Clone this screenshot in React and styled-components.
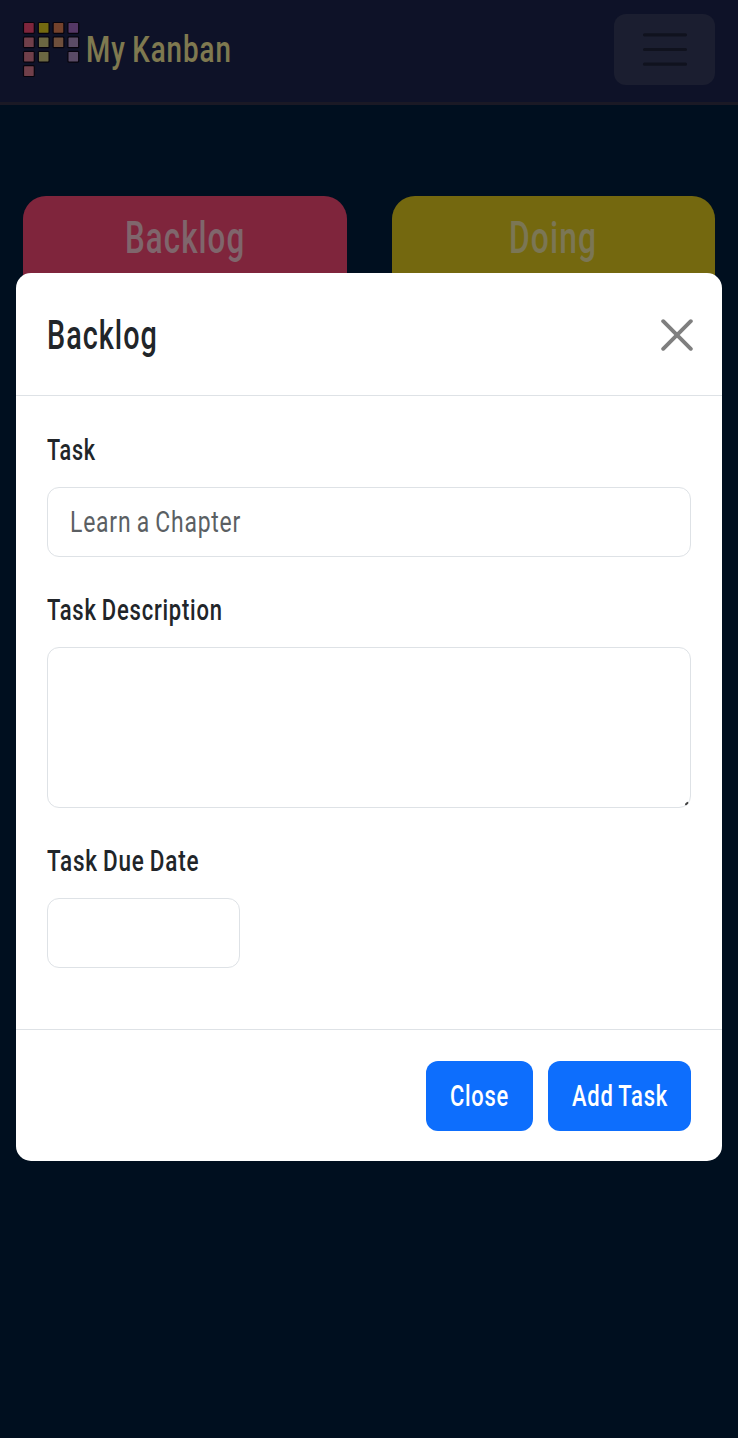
import React, { useLayoutEffect, useRef, useState } from "react";
import styled, { createGlobalStyle } from "styled-components";

const GlobalStyle = createGlobalStyle`
  * { box-sizing: border-box; }
  body {
    margin: 0;
    background: #001e3e;
    font-family: Roboto, "Liberation Sans", sans-serif;
    color: #212529;
  }
`;

const FitBox = styled.span`
  display: block;
  flex: none;
  width: ${(p) => p.$width}px;
  white-space: nowrap;
`;

const FitText = styled.span`
  display: inline-block;
  letter-spacing: 0.035em;
  word-spacing: -0.05em;
  transform-origin: 0 50%;
`;

/* Condenses a line of text to the given width. */
function Condensed({ width, children }) {
  const ref = useRef(null);
  const [scale, setScale] = useState(1);
  useLayoutEffect(() => {
    setScale(width / ref.current.offsetWidth);
  }, [width]);
  return (
    <FitBox $width={width}>
      <FitText ref={ref} style={{ transform: `scaleX(${scale})` }}>
        {children}
      </FitText>
    </FitBox>
  );
}

const Page = styled.div`
  position: relative;
  height: 1438px;
  overflow: hidden;
`;

const Navbar = styled.header`
  display: flex;
  justify-content: space-between;
  height: 105px;
  padding: 14px 23px 0 22px;
  background: #1c2450;
  border-bottom: 3px solid #35334a;
`;

const Brand = styled.div`
  display: flex;
  gap: 6px;
  height: 72px;
  padding-top: 7px;
  font-size: 37px;
  font-weight: 500;
  line-height: 58px;
  color: #fff3a0;
`;

const Logo = styled.svg`
  display: block;
  width: 58px;
  height: 58px;
`;

const Toggler = styled.button`
  display: flex;
  align-items: center;
  justify-content: center;
  width: 101px;
  height: 71px;
  padding: 0;
  border: 0;
  border-radius: 12px;
  background: #363c60;
`;

const Board = styled.main`
  display: flex;
  gap: 45px;
  padding: 91px 23px 0;
`;

const Column = styled.section`
  display: flex;
  flex: 1;
  justify-content: center;
  height: 120px;
  border-radius: 23px 23px 0 0;
  background: ${(p) => p.$fill};
  color: ${(p) => p.$ink};
  font-size: 44px;
  font-weight: 500;
  line-height: 84px;
`;

const Backdrop = styled.div`
  position: absolute;
  inset: 0;
  padding: 273px 16px 0;
  background: rgba(0, 0, 0, 0.5);
`;

const Dialog = styled.div`
  width: 706px;
  height: 888px;
  border-radius: 15px;
  background: #fff;
`;

const DialogHeader = styled.div`
  display: flex;
  align-items: center;
  justify-content: space-between;
  height: 123px;
  padding: 1px 29px 0 31px;
  border-bottom: 1px solid #dee2e6;
  font-size: 41px;
  font-weight: 500;
`;

const CloseIcon = styled.svg`
  display: block;
  width: 32px;
  height: 32px;
`;

const DialogBody = styled.form`
  height: 634px;
  padding: 33px 31px 0;
  border-bottom: 1px solid #dee2e6;
`;

const Label = styled.label`
  display: block;
  height: 42px;
  margin-bottom: 16px;
  font-size: 30px;
  font-weight: 500;
  line-height: 42px;
`;

const Field = styled.div`
  position: relative;
  width: ${(p) => p.$width || 644}px;
  height: ${(p) => p.$height || 70}px;
  margin-bottom: ${(p) => p.$after || 0}px;
  padding: 0 22px;
  border: 1px solid #dee2e6;
  border-radius: 12px;
  color: #5b5f63;
  font-size: 30px;
  line-height: 68px;
`;

const Grip = styled.svg`
  position: absolute;
  right: 0;
  bottom: 0;
  width: 8px;
  height: 8px;
`;

const DialogFooter = styled.div`
  display: flex;
  justify-content: flex-end;
  gap: 15px;
  padding: 31px 31px 0;
`;

const Button = styled.button`
  display: flex;
  justify-content: center;
  width: ${(p) => p.$width}px;
  height: 70px;
  padding: 0;
  border: 0;
  border-radius: 12px;
  background: #0d6efd;
  color: #fff;
  font: 500 30px/70px Roboto, "Liberation Sans", sans-serif;
`;

const tiles = [
  ["#fe4a78", "#e07f94", "#e07f94", "#e07f94"],
  ["#e8d520", "#d6cf85", "#d6cf85"],
  ["#e88558", "#dc9f78"],
  ["#aa70cc", "#b496cc", "#b496cc"],
];

export default function App() {
  return (
    <Page>
      <GlobalStyle />
      <Navbar>
        <Brand>
          <Logo viewBox="0 0 58 58">
            {tiles.map((column, x) =>
              column.map((fill, y) => (
                <rect
                  key={`${x}-${y}`}
                  x={1.5 + x * 14.8}
                  y={1.5 + y * 14.4}
                  width="10.8"
                  height="10.8"
                  rx="1"
                  fill={fill}
                  stroke="#0d0718"
                  strokeWidth="1.2"
                />
              ))
            )}
          </Logo>
          <Condensed width={146}>My Kanban</Condensed>
        </Brand>
        <Toggler aria-label="Menu">
          <svg width="46" height="36" viewBox="0 0 46 36">
            <path
              d="M2.5 2.8h41M2.5 17.5h41M2.5 32.2h41"
              stroke="#20243c"
              strokeWidth="3.2"
              strokeLinecap="round"
            />
          </svg>
        </Toggler>
      </Navbar>
      <Board>
        <Column $fill="#fe4a78" $ink="#ffffffb8">
          <Condensed width={120}>Backlog</Condensed>
        </Column>
        <Column $fill="#e8d01e" $ink="#ffffffa0">
          <Condensed width={88}>Doing</Condensed>
        </Column>
      </Board>
      <Backdrop>
        <Dialog role="dialog">
          <DialogHeader>
            <Condensed width={111}>Backlog</Condensed>
            <CloseIcon viewBox="0 0 32 32">
              <path
                d="M2.2 2.2l27.6 27.6M29.8 2.2L2.2 29.8"
                stroke="#7f7f7f"
                strokeWidth="3.9"
                strokeLinecap="round"
              />
            </CloseIcon>
          </DialogHeader>
          <DialogBody>
            <Label><Condensed width={49}>Task</Condensed></Label>
            <Field $after={32}>
              <Condensed width={171}>Learn a Chapter</Condensed>
            </Field>
            <Label><Condensed width={176}>Task Description</Condensed></Label>
            <Field $height={161} $after={32}>
              <Grip viewBox="0 0 8 8">
                <path d="M4 5.2L5.4 3.9" stroke="#444" strokeWidth="2" strokeLinecap="round" />
              </Grip>
            </Field>
            <Label><Condensed width={152}>Task Due Date</Condensed></Label>
            <Field $width={193} />
          </DialogBody>
          <DialogFooter>
            <Button $width={107}><Condensed width={59}>Close</Condensed></Button>
            <Button $width={143}><Condensed width={96}>Add Task</Condensed></Button>
          </DialogFooter>
        </Dialog>
      </Backdrop>
    </Page>
  );
}
